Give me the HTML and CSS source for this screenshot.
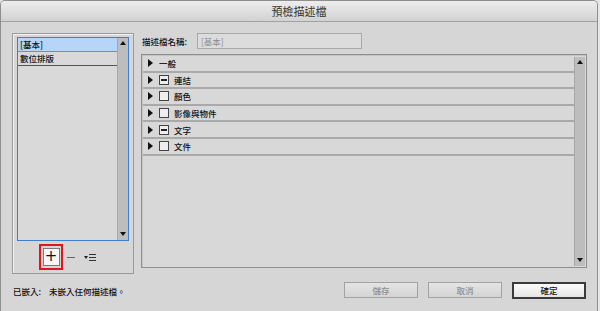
FILE: index.html
```html
<!DOCTYPE html>
<html lang="zh-Hant">
<head>
    <meta charset="UTF-8">
    <title>預檢描述檔</title>
    <link rel="stylesheet" href="styles.css">
</head>
<body>
    <div class="window">
        <div class="titlebar">預檢描述檔</div>

        <div class="main">
            <div class="group">
                <div class="list">
                    <div class="list-items">
                        <div class="list-item selected">[基本]</div>
                        <div class="list-item last">數位排版</div>
                    </div>
                    <div class="scrollbar">
                        <span class="arrow-up"></span>
                        <span class="arrow-down"></span>
                    </div>
                </div>
                <div class="tools">
                    <div class="highlight"><div class="add-btn">+</div></div>
                    <div class="remove-btn"></div>
                    <div class="menu-btn"><span class="caret"></span><span class="lines"></span></div>
                </div>
            </div>

            <div class="right">
                <div class="name-row">
                    <span class="name-label">描述檔名稱:</span>
                    <div class="name-input">[基本]</div>
                </div>
                <div class="tree">
                    <div class="tree-rows">
                        <div class="tree-row"><span class="tri"></span><span class="tree-text first">一般</span></div>
                        <div class="tree-row"><span class="tri"></span><span class="check mixed"></span><span class="tree-text">連結</span></div>
                        <div class="tree-row"><span class="tri"></span><span class="check"></span><span class="tree-text">顏色</span></div>
                        <div class="tree-row"><span class="tri"></span><span class="check"></span><span class="tree-text">影像與物件</span></div>
                        <div class="tree-row"><span class="tri"></span><span class="check mixed"></span><span class="tree-text">文字</span></div>
                        <div class="tree-row"><span class="tri"></span><span class="check"></span><span class="tree-text">文件</span></div>
                    </div>
                    <div class="scrollbar big">
                        <span class="arrow-up"></span>
                        <span class="arrow-down"></span>
                    </div>
                </div>
            </div>
        </div>

        <div class="footer">
            <div class="status"><span class="status-label">已嵌入:</span>未嵌入任何描述檔。</div>
            <div class="buttons">
                <div class="btn disabled">儲存</div>
                <div class="btn disabled">取消</div>
                <div class="btn default">確定</div>
            </div>
        </div>
    </div>
</body>
</html>
```

FILE: styles.css
```css
body {
    margin: 0;
    background-color: #e6e6e6;
    font-family: "Noto Sans CJK TC", "Liberation Sans", sans-serif;
    font-size: 8.5px;
    font-weight: 500;
    color: #111;
}
.window {
    width: 596px;
    height: 310px;
    border: 1px solid #8f8f8f;
    border-bottom: none;
    border-radius: 5px 5px 0 0;
    background-color: #d6d6d6;
    overflow: hidden;
}
.titlebar {
    height: 20px;
    line-height: 20px;
    text-align: center;
    font-size: 11px;
    font-weight: 400;
    color: #333;
    background-image: linear-gradient(to bottom, #ededed, #d2d2d2);
    border-bottom: 1px solid #a2a2a2;
}
.main {
    display: flex;
    align-items: flex-start;
    padding: 11px 0 0 11px;
    gap: 7px;
}

/* left group box */
.group {
    box-sizing: border-box;
    width: 122px;
    height: 241px;
    border: 1px solid #9a9a9a;
    box-shadow: inset 1px 1px 0 #f2f2f2;
    padding: 3px 4px 0 4px;
    display: flex;
    flex-direction: column;
}
.list {
    height: 202px;
    border: 1px solid #3d7fd0;
    display: flex;
    background-color: #d9d9d9;
}
.list-items {
    flex: 1;
}
.list-item {
    height: 13px;
    line-height: 13px;
    padding-left: 2px;
    border-bottom: 1px solid #8a8a8a;
}
.list-item.selected {
    background-color: #b6d5f8;
}
.list-item.last {
    border-bottom: 1px solid #555;
}
.scrollbar {
    width: 10px;
    background-color: #bdbdbd;
    border-left: 1px solid #a8a8a8;
    position: relative;
}
.scrollbar.big {
    width: 10px;
    margin: 2px 1px 1px 0;
}
.arrow-up,
.arrow-down {
    position: absolute;
    left: 2px;
    width: 0;
    height: 0;
    border-left: 3px solid transparent;
    border-right: 3px solid transparent;
}
.arrow-up {
    top: 3px;
    border-bottom: 4px solid #111;
}
.arrow-down {
    bottom: 4px;
    border-top: 4px solid #111;
}

.tools {
    display: flex;
    align-items: center;
    height: 32px;
    padding-left: 22px;
}
.highlight {
    width: 20px;
    height: 22px;
    border: 2px solid #e8131a;
    display: flex;
    align-items: center;
    justify-content: center;
}
.add-btn {
    width: 15px;
    height: 16px;
    border: 1px solid #7a7a7a;
    background-color: #f7f7f7;
    font-family: "DejaVu Sans", sans-serif;
    font-size: 15px;
    line-height: 15px;
    text-align: center;
    color: #111;
}
.remove-btn {
    width: 8px;
    height: 1px;
    background-color: #666;
    margin-left: 4px;
}
.menu-btn {
    display: flex;
    align-items: center;
    margin-left: 9px;
}
.caret {
    width: 0;
    height: 0;
    border-left: 2px solid transparent;
    border-right: 2px solid transparent;
    border-top: 3px solid #222;
    margin-right: 1px;
}
.lines {
    width: 7px;
    height: 5px;
    border-top: 1px solid #333;
    border-bottom: 1px solid #333;
    background-image: linear-gradient(to bottom, transparent 2px, #333 2px, #333 3px, transparent 3px);
}

/* right side */
.right {
    width: 446px;
}
.name-row {
    display: flex;
    align-items: center;
    height: 16px;
}
.name-label {
    width: 55px;
    padding-left: 1px;
}
.name-input {
    width: 160px;
    height: 14px;
    line-height: 14px;
    border: 1px solid #a9a9a9;
    background-color: #dcdcdc;
    color: #8d8d8d;
    font-weight: 400;
    padding-left: 3px;
}
.tree {
    margin-top: 5px;
    height: 212px;
    border: 1px solid #8e8e8e;
    box-shadow: inset 1px 1px 0 #c4c4c4;
    display: flex;
    background-color: #d8d8d8;
}
.tree-rows {
    flex: 1;
    padding-left: 1px;
    padding-top: 1px;
}
.tree-row {
    height: 16.6px;
    box-sizing: border-box;
    border-bottom: 2px solid #a9a9a9;
    display: flex;
    align-items: center;
}
.tri {
    width: 0;
    height: 0;
    border-top: 4px solid transparent;
    border-bottom: 4px solid transparent;
    border-left: 5px solid #111;
    margin-left: 5px;
}
.check {
    width: 8px;
    height: 8px;
    border: 1px solid #444;
    background-color: #eeeeee;
    margin-left: 6px;
    position: relative;
}
.check.mixed::after {
    content: '';
    position: absolute;
    left: 1px;
    right: 1px;
    top: 3px;
    height: 2px;
    background-color: #222;
}
.tree-text {
    margin-left: 5px;
}
.tree-text.first {
    margin-left: 6px;
}

/* footer */
.footer {
    display: flex;
    align-items: center;
    justify-content: space-between;
    padding: 8px 11px 0 12px;
}
.status-label {
    margin-right: 8px;
}
.buttons {
    display: flex;
    gap: 10px;
}
.btn {
    width: 72px;
    height: 14px;
    line-height: 14px;
    text-align: center;
    border: 1px solid #a2a2a2;
    background-image: linear-gradient(to bottom, #e4e4e4, #d4d4d4);
}
.btn.disabled {
    color: #8e8e8e;
}
.btn.default {
    border: 2px solid #3a3a3a;
    width: 70px;
    height: 13px;
    line-height: 13px;
    background-image: linear-gradient(to bottom, #fafafa, #e6e6e6);
    color: #111;
}
```
